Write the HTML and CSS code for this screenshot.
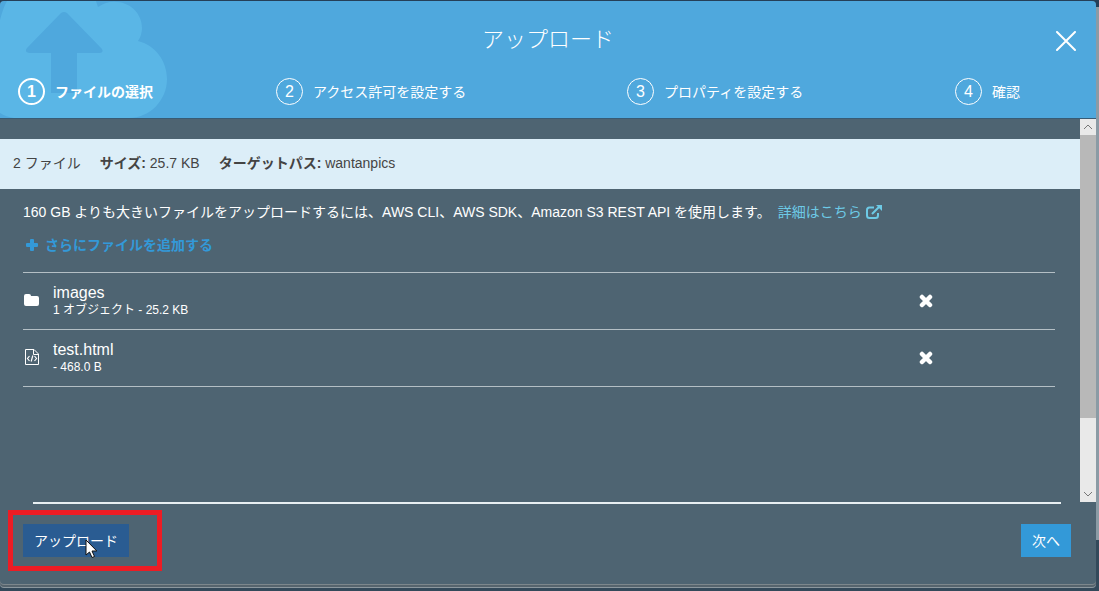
FILE: index.html
```html
<!DOCTYPE html>
<html lang="ja">
<head>
    <meta charset="UTF-8">
    <meta name="viewport" content="width=device-width, initial-scale=1.0">
    <title>アップロード</title>
    <link rel="stylesheet" href="styles.css">
</head>
<body>
    <div class="dialog" role="dialog" aria-labelledby="dialog-title">
        <header class="dialog-header">
            <svg class="cloud" width="168" height="117" viewBox="0 0 168 117" aria-hidden="true">
                <path fill="#5ab6e6" d="M0 19Q3 7 7 0H96L98 6Q107 0 117 1C132 2 142 14 142 27Q142 34 138 40C155 44 167 60 167 78C167 99 150 117 129 117H14Q6 116 0 112Z"/>
                <path fill="#4fa8dd" d="M61 12Q64 10 67 12L102 48Q104 52 99 52H77V92H51V52H29Q24 51 27 47Z"/>
            </svg>
            <div class="title-row">
                <h1 id="dialog-title">アップロード</h1>
                <button class="close-btn" aria-label="閉じる">
                    <svg width="20" height="20" viewBox="0 0 20 20"><path d="M1 1L19 19M19 1L1 19" stroke="#fff" stroke-width="2" stroke-linecap="round"/></svg>
                </button>
            </div>
            <ol class="steps">
                <li class="step active"><span class="step-number">1</span>ファイルの選択</li>
                <li class="step"><span class="step-number">2</span>アクセス許可を設定する</li>
                <li class="step"><span class="step-number">3</span>プロパティを設定する</li>
                <li class="step"><span class="step-number">4</span>確認</li>
            </ol>
        </header>

        <div class="dialog-body">
            <main class="content">
                <div class="summary">
                    <span>2 ファイル</span>
                    <span><b>サイズ:</b> 25.7 KB</span>
                    <span><b>ターゲットパス:</b> wantanpics</span>
                </div>
                <div class="upload-area">
                    <p class="notice">160 GB よりも大きいファイルをアップロードするには、AWS CLI、AWS SDK、Amazon S3 REST API を使用します。
                        <a class="more-link" href="#">詳細はこちら
                            <svg width="16" height="14" viewBox="0 0 16 14" fill="none" stroke="currentColor" stroke-width="2"><path d="M8 2.5H3.5Q1 2.5 1 5V10.500Q1 13 3.500 13H9.500Q12 13 12 10.500V8M6 9L13 2"/><path d="M10 0H16V6Z" fill="currentColor" stroke="none"/></svg>
                        </a>
                    </p>
                    <button class="add-btn">
                        <svg width="12" height="12" viewBox="0 0 12 12" fill="currentColor"><path d="M5 0H7Q8 0 8 1V4H11Q12 4 12 5V7Q12 8 11 8H8V11Q8 12 7 12H5Q4 12 4 11V8H1Q0 8 0 7V5Q0 4 1 4H4V1Q4 0 5 0Z"/></svg>
                        さらにファイルを追加する
                    </button>
                    <ul class="file-list">
                        <li class="file">
                            <svg class="file-icon" width="18" height="18" viewBox="0 0 18 18"><path fill="#fff" d="M1 4Q1 2 3 2H6Q8 2 8 4H14Q16 4 16 6V12Q16 14 14 14H3Q1 14 1 12Z"/></svg>
                            <div class="file-info">
                                <div class="file-name">images</div>
                                <div class="file-meta">1 オブジェクト - 25.2 KB</div>
                            </div>
                            <button class="remove-btn" aria-label="images を削除">
                                <svg width="14" height="14" viewBox="0 0 14 14"><path d="M3 3L11 11M11 3L3 11" stroke="#fff" stroke-width="4.500" stroke-linecap="round"/></svg>
                            </button>
                        </li>
                        <li class="file">
                            <svg class="file-icon" width="18" height="18" viewBox="0 0 18 18" fill="none" stroke="#fff"><path d="M2.500 .5H11L15.500 5V15.500H2.500ZM10.500 .5V5.500H15.500"/><path d="M6.500 7L4.500 9.500L6.500 12M11.500 7L13.500 9.500L11.500 12M9.800 6.500L8.200 12.500" stroke-width="1.200"/></svg>
                            <div class="file-info">
                                <div class="file-name">test.html</div>
                                <div class="file-meta">- 468.0 B</div>
                            </div>
                            <button class="remove-btn" aria-label="test.html を削除">
                                <svg width="14" height="14" viewBox="0 0 14 14"><path d="M3 3L11 11M11 3L3 11" stroke="#fff" stroke-width="4.500" stroke-linecap="round"/></svg>
                            </button>
                        </li>
                    </ul>
                </div>
                <hr class="footer-line">
            </main>
            <div class="scrollbar" aria-hidden="true">
                <svg width="16" height="16" viewBox="0 0 16 16" fill="none" stroke="#777"><path d="M4 10L8 6L12 10"/></svg>
                <div class="thumb"></div>
                <div class="track"></div>
                <svg width="16" height="16" viewBox="0 0 16 16" fill="none" stroke="#777"><path d="M4 6L8 10L12 6"/></svg>
            </div>
        </div>

        <footer class="dialog-footer">
            <div class="upload-wrap">
                <button class="btn btn-upload">アップロード</button>
                <div class="highlight"></div>
                <svg class="cursor" width="13" height="20" viewBox="0 0 13 20"><path d="M1 1V16L4.500 13L7 18.500L9.500 17.500L7 12H11.800Z" fill="#fff" stroke="#111"/></svg>
            </div>
            <button class="btn btn-next">次へ</button>
        </footer>
    </div>
</body>
</html>
```

FILE: styles.css
```css
* {
    box-sizing: border-box;
}
body {
    font-family: "Liberation Sans", "Noto Sans CJK JP", sans-serif;
    font-size: 14px;
    line-height: 20px;
    margin: 0;
    min-height: 100vh;
    padding: 1px 3px 7px 0;
    display: flex;
    background: linear-gradient(#253f58 7px, #8b9ba5 7px, #8b9ba5 540px, #33495a 540px);
    color: #fff;
}
button {
    font: inherit;
    color: inherit;
    border: none;
    background: none;
    padding: 0;
    cursor: pointer;
}
svg {
    display: block;
}
.dialog {
    flex: 1;
    display: flex;
    flex-direction: column;
    background: #4e6472;
    border-radius: 4px;
    box-shadow: 0 1px 0 #7d878c, 0 3px 0 #56646d, 0 4px 0 #8b979e, 0 8px 0 #33495a;
}
.dialog-header {
    position: relative;
    height: 118px;
    background: #4fa8dd;
    border-bottom: 1px solid #385b74;
    border-radius: 4px 4px 0 0;
    overflow: hidden;
}
.cloud {
    position: absolute;
    left: 0;
    top: 0;
}
.title-row {
    position: relative;
    display: flex;
    justify-content: center;
    align-items: center;
    height: 77px;
}
.title-row h1 {
    font-size: 22px;
    font-weight: 300;
    line-height: 32px;
    margin: 0;
}
.close-btn {
    position: absolute;
    right: 20px;
    top: 30px;
}
.steps {
    position: relative;
    display: grid;
    grid-template-columns: 258fr 351fr 328fr 141fr;
    margin: 0;
    padding: 0 0 0 18px;
    list-style: none;
}
.step {
    display: flex;
    align-items: center;
    gap: 10px;
    white-space: nowrap;
}
.step-number {
    width: 27px;
    height: 27px;
    line-height: 25px;
    border: 1px solid #fff;
    border-radius: 50%;
    font-size: 16px;
    text-align: center;
}
.step.active {
    font-weight: bold;
}
.step.active .step-number {
    border-width: 2px;
    line-height: 23px;
}
.dialog-body {
    flex: 1;
    display: flex;
}
.content {
    flex: 1;
    display: flex;
    flex-direction: column;
    padding-top: 20px;
}
.summary {
    display: flex;
    align-items: center;
    gap: 19px;
    height: 50px;
    padding: 0 13px 2px;
    background: #dceef8;
    color: #444;
}
.upload-area {
    padding: 13px 25px 0 23px;
}
.notice {
    display: flex;
    gap: 7px;
    margin: 0;
}
.more-link {
    display: flex;
    align-items: center;
    gap: 4px;
    color: #6dcae6;
    text-decoration: none;
}
.add-btn {
    display: flex;
    align-items: center;
    gap: 7px;
    margin: 13px 0 17px 3px;
    color: #3399d8;
    font-weight: bold;
}
.file-list {
    margin: 0;
    padding: 0;
    list-style: none;
    border-top: 1px solid #b4bfc5;
}
.file {
    display: grid;
    grid-template-columns: 30px 1fr 136px;
    align-items: center;
    height: 57px;
    border-bottom: 1px solid #b4bfc5;
}
.file-name {
    font-size: 16px;
    line-height: 18px;
}
.file-meta {
    font-size: 12px;
    line-height: 16px;
}
.footer-line {
    width: calc(100% - 52px);
    height: 2px;
    margin: auto 19px 0 33px;
    border: none;
    background: #e8eff2;
}
.scrollbar {
    width: 16px;
    margin-bottom: 2px;
    display: flex;
    flex-direction: column;
    background: #e9e9e9;
}
.thumb {
    flex: 283;
    background: #b8b8b8;
}
.track {
    flex: 68;
}
.dialog-footer {
    display: flex;
    justify-content: space-between;
    padding: 20px 25px 27px 23px;
}
.btn {
    height: 33px;
    padding: 0 11px;
}
.btn-upload {
    background: #2a5c92;
}
.btn-next {
    background: #3399d8;
}
.upload-wrap {
    position: relative;
}
.highlight {
    position: absolute;
    inset: -14px -33px -14px -15px;
    border: 5px solid #ed1c24;
    pointer-events: none;
}
.cursor {
    position: absolute;
    left: 62px;
    top: 15px;
}
```
